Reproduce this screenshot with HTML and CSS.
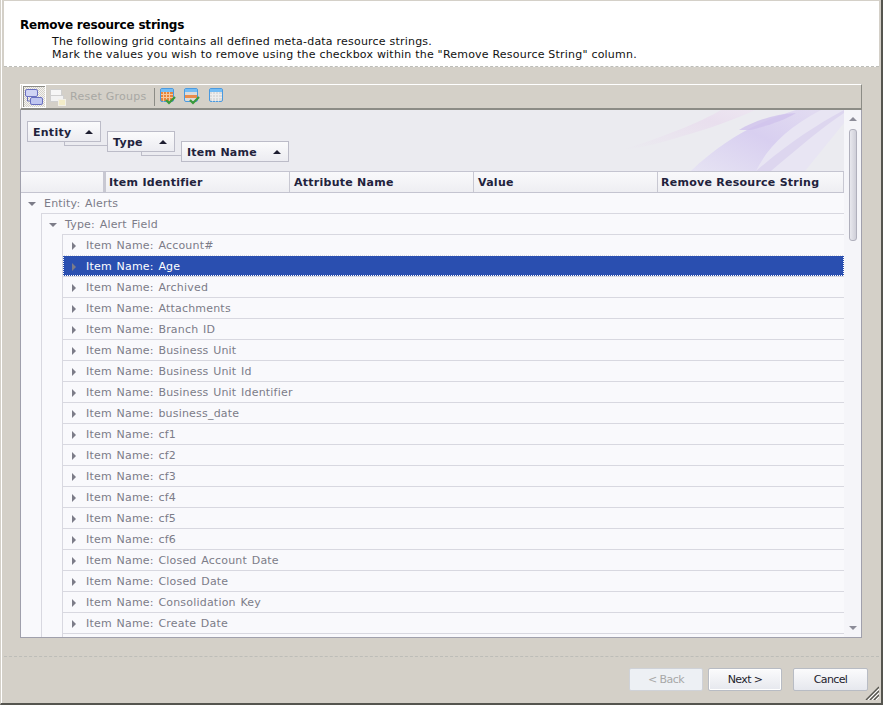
FILE: index.html
```html
<!DOCTYPE html>
<html lang="en">
<head>
<meta charset="utf-8">
<title>Remove resource strings</title>
<link rel="stylesheet" href="styles.css">
</head>
<body>
<div class="window">
  <header class="intro">
    <h1 class="intro-title">Remove resource strings</h1>
    <p class="intro-text">The following grid contains all defined meta-data resource strings.</p>
    <p class="intro-text">Mark the values you wish to remove using the checkbox within the "Remove Resource String" column.</p>
  </header>
  <main class="content">
    <section class="grid">
      <div class="toolbar">
        <button class="tool tool-active" type="button" aria-label="Group">
          <svg width="20" height="20" viewBox="0 0 20 20"><rect x="1.500" y="2.500" width="12" height="7" rx="1.500" fill="#d0d4f4" stroke="#6a70c0"/><rect x="6.500" y="10.500" width="12" height="7" rx="1.500" fill="#c0c6f0" stroke="#6a70c0"/><path d="M3.500 9.500v4.500h3" fill="none" stroke="#6a70c0"/></svg>
        </button>
        <button class="tool tool-disabled" type="button">
          <svg width="18" height="20" viewBox="0 0 18 20"><rect x="1.500" y="2.500" width="11" height="6" fill="#f6f6f6" stroke="#cfcfcf"/><rect x="1.500" y="8.500" width="13" height="6" fill="#f2f2f2" stroke="#cfcfcf"/><rect x="9.500" y="12.500" width="7" height="6" fill="#f3ecc8" stroke="#f2f0e6"/></svg>
          <span class="tool-label">Reset Groups</span>
        </button>
        <span class="tool-sep"></span>
        <button class="tool tool-icon" type="button" aria-label="Select all">
          <svg width="16" height="17" viewBox="0 0 16 17"><rect x="0.500" y="0.500" width="13" height="13" rx="1.500" fill="#e8843c" stroke="#4a9ae0"/><rect x="1" y="1" width="12" height="3" fill="#74bcf4"/><path d="M3.500 4v9.500M6.500 4v9.500M9.500 4v9.500M1 6.500h12M1 9.500h12" stroke="#f6c9a0"/><path d="M6 12l3 3 6-6" fill="none" stroke="#3a9a3a" stroke-width="2.200"/></svg>
        </button>
        <button class="tool tool-icon" type="button" aria-label="Select filtered">
          <svg width="16" height="17" viewBox="0 0 16 17"><rect x="0.500" y="0.500" width="13" height="13" rx="1.500" fill="#dcdcdc" stroke="#4a9ae0"/><rect x="1" y="1" width="12" height="3" fill="#74bcf4"/><rect x="1" y="7" width="12" height="3" fill="#ea8c4c"/><path d="M6 12l3 3 6-6" fill="none" stroke="#3a9a3a" stroke-width="2.200"/></svg>
        </button>
        <button class="tool tool-icon tool-last" type="button" aria-label="Clear selection">
          <svg width="15" height="17" viewBox="0 0 15 17"><rect x="0.500" y="0.500" width="13" height="13" rx="1.500" fill="#dcdcdc" stroke="#4a9ae0"/><rect x="1" y="1" width="12" height="3" fill="#74bcf4"/><path d="M3.500 4v9.500M6.500 4v9.500M9.500 4v9.500M1 6.500h12M1 9.500h12" stroke="#eeeeee"/></svg>
        </button>
      </div>
      <div class="grid-body">
        <div class="grid-main">
          <div class="group-area">
            <svg class="swoosh" width="823" height="61" viewBox="0 0 823 61" aria-hidden="true">
              <defs>
                <linearGradient id="sw" x1="0" y1="1" x2="1" y2="0"><stop offset="0" stop-color="#e6e3f3"/><stop offset="0.550" stop-color="#d8cff0"/><stop offset="1" stop-color="#e2dcf1"/></linearGradient>
                <linearGradient id="pk" x1="0" y1="1" x2="1" y2="0"><stop offset="0" stop-color="#ebebf0"/><stop offset="0.700" stop-color="#e9dfee"/><stop offset="1" stop-color="#ede6f1"/></linearGradient>
              </defs>
              <path d="M600 40C640 28 680 12 700 0H734C712 10 690 18 662 26C640 33 620 38 600 40Z" fill="url(#pk)"/>
              <path d="M670 61C700 33 730 14 775 0H823V13L784 61Z" fill="#e8e5f3"/>
              <path d="M670 61C700 33 730 14 775 0H800C765 18 745 40 735 61Z" fill="url(#sw)"/>
              <path d="M718 20C735 10 755 4 775 3C762 11 745 16 730 20Z" fill="#cfc2ec" opacity="0.800"/>
              <path d="M735 61C765 35 795 15 823 0V3C800 18 775 40 750 61Z" fill="#ddd6ef"/>
            </svg>
            <div class="group-chip chip-entity"><span>Entity</span><i class="sort-up"></i></div>
            <div class="group-chip chip-type"><span>Type</span><i class="sort-up"></i></div>
            <div class="group-chip chip-item"><span>Item Name</span><i class="sort-up"></i></div>
            <span class="link link-a"></span>
            <span class="link link-b"></span>
          </div>
          <div class="col-head">
            <div class="col col-spacer"></div>
            <div class="col col-a">Item Identifier</div>
            <div class="col col-b">Attribute Name</div>
            <div class="col col-b2">Value</div>
            <div class="col col-c">Remove Resource String</div>
          </div>
          <div class="tree">
            <div class="row level-0"><i class="arrow-down"></i>Entity: Alerts</div>
            <div class="indent">
              <div class="row level-1"><i class="arrow-down"></i>Type: Alert Field</div>
              <div class="indent">
                <div class="row item"><i class="arrow-right"></i>Item Name: Account#</div>
                <div class="row item selected"><i class="arrow-right"></i>Item Name: Age</div>
                <div class="row item"><i class="arrow-right"></i>Item Name: Archived</div>
                <div class="row item"><i class="arrow-right"></i>Item Name: Attachments</div>
                <div class="row item"><i class="arrow-right"></i>Item Name: Branch ID</div>
                <div class="row item"><i class="arrow-right"></i>Item Name: Business Unit</div>
                <div class="row item"><i class="arrow-right"></i>Item Name: Business Unit Id</div>
                <div class="row item"><i class="arrow-right"></i>Item Name: Business Unit Identifier</div>
                <div class="row item"><i class="arrow-right"></i>Item Name: business_date</div>
                <div class="row item"><i class="arrow-right"></i>Item Name: cf1</div>
                <div class="row item"><i class="arrow-right"></i>Item Name: cf2</div>
                <div class="row item"><i class="arrow-right"></i>Item Name: cf3</div>
                <div class="row item"><i class="arrow-right"></i>Item Name: cf4</div>
                <div class="row item"><i class="arrow-right"></i>Item Name: cf5</div>
                <div class="row item"><i class="arrow-right"></i>Item Name: cf6</div>
                <div class="row item"><i class="arrow-right"></i>Item Name: Closed Account Date</div>
                <div class="row item"><i class="arrow-right"></i>Item Name: Closed Date</div>
                <div class="row item"><i class="arrow-right"></i>Item Name: Consolidation Key</div>
                <div class="row item"><i class="arrow-right"></i>Item Name: Create Date</div>
                <div class="row item"></div>
              </div>
            </div>
          </div>
        </div>
        <div class="scrollbar">
          <i class="scroll-up"></i>
          <div class="scroll-thumb"></div>
          <i class="scroll-down"></i>
        </div>
      </div>
    </section>
  </main>
  <footer class="footer">
    <button class="btn btn-disabled" type="button" disabled>&lt; Back</button>
    <button class="btn btn-next" type="button">Next &gt;</button>
    <button class="btn btn-cancel" type="button">Cancel</button>
    <svg class="grip" width="14" height="14" viewBox="0 0 14 14" aria-hidden="true"><path d="M1 14L14 1M5 14L14 5M9 14L14 9" stroke="#55554f" stroke-width="1.400"/><path d="M3 14L14 3M7 14L14 7M11 14L14 11" stroke="#fff" stroke-width="1"/></svg>
  </footer>
</div>
</body>
</html>
```
FILE: styles.css
```css
* { box-sizing: border-box; }
html, body { margin: 0; padding: 0; }
body { width: 883px; height: 705px; overflow: hidden; font-family: "DejaVu Sans", sans-serif; font-size: 11px; letter-spacing: 0.26px; }
.window { width: 883px; height: 705px; background: #d4d0c8; padding: 0 0 0 3px; border-left: 1px solid #d4d0c8; box-shadow: inset 1px 0 0 #fff; border-bottom: 2px solid #55554f; border-right: 2px solid #55554f; display: flex; flex-direction: column; position: relative; }
.intro { margin: 1px 2px 0 0; height: 66px; background: #fff; padding: 17px 16px 0 16px; border-bottom: 1px dashed #bdbdb8; }
.intro-title { margin: 0 0 3px; font-size: 12px; line-height: 14px; font-weight: bold; color: #000; letter-spacing: -0.2px; }
.intro-text { margin: 0 0 0 32px; font-size: 11px; line-height: 13px; color: #111; letter-spacing: 0.21px; }
.content { height: 589px; flex: none; padding: 17px 0 0 16px; }
.grid { width: 842px; height: 554px; display: flex; flex-direction: column; }
.toolbar { height: 26px; flex: none; display: flex; align-items: center; background: #d4d0c8; border-top: 1px solid #fff; border-left: 1px solid #fff; border-right: 1px solid #8c8c86; border-bottom: 2px solid #8c8c86; padding-left: 1px; }
.tool { border: 0; background: none; padding: 0; display: flex; align-items: center; font: inherit; letter-spacing: inherit; height: 23px; }
.tool-active { width: 24px; justify-content: center; border: 1px solid #fff; background: repeating-conic-gradient(#d4d0c8 0 25%, #f4f4f2 0 50%) 0 0 / 2px 2px; box-shadow: inset 1px 1px 0 #8c8c86; margin-right: 3px; }
.tool-label { color: #a8a8a4; margin-left: 3px; }
.tool-sep { width: 1px; height: 18px; background: #8c8c86; margin: 0 5px 0 7px; }
.tool-icon { width: 16px; margin-right: 8px; }
.tool-last { margin-left: 1px; }
.grid-body { flex: 1; min-height: 0; display: flex; border-left: 1px solid #a0a0ac; border-bottom: 1px solid #a0a0ac; border-right: 1px solid #a0a0ac; }
.grid-main { width: 823px; display: flex; flex-direction: column; min-height: 0; overflow: hidden; background: #f9f9fc; }
.group-area { height: 61px; flex: none; background: #ebebf0; position: relative; overflow: hidden; }
.swoosh { position: absolute; left: 0; top: 0; }
.group-chip { position: absolute; height: 21px; background: linear-gradient(#fbfbfc, #ececf1); border: 1px solid #bcbcc8; display: flex; align-items: center; justify-content: space-between; padding: 1px 7px 0 5px; font-weight: bold; color: #22223c; z-index: 1; }
.chip-entity { left: 6px; top: 11px; width: 74px; }
.chip-type { left: 86px; top: 21px; width: 68px; }
.chip-item { left: 160px; top: 31px; width: 108px; }
.sort-up { width: 0; height: 0; border-left: 4px solid transparent; border-right: 4px solid transparent; border-bottom: 4px solid #1e1e30; }
.link { position: absolute; border-left: 1px solid #bcbcc8; border-bottom: 1px solid #bcbcc8; height: 4px; }
.link-a { left: 43px; top: 32px; width: 43px; }
.link-b { left: 120px; top: 42px; width: 40px; }
.col-head { height: 22px; flex: none; display: flex; border-top: 1px solid #c4c4d0; border-bottom: 1px solid #c4c4d0; background: linear-gradient(#f9f9fb, #eeeef2); font-weight: bold; color: #22223c; line-height: 22px; }
.col { border-right: 1px solid #c8c8d2; padding-left: 4px; white-space: nowrap; overflow: hidden; }
.col-spacer { width: 85px; border-right: 3px solid #c8c8d2; }
.col-a { width: 184px; padding-left: 3px; }
.col-b { width: 184px; }
.col-b2 { width: 184px; }
.col-c { width: 186px; padding-left: 3px; }
.tree { flex: 1; min-height: 0; overflow: hidden; color: #7c7c88; margin-top: -1px; letter-spacing: 0.2px; word-spacing: 1px; }
.indent { margin-left: 20px; border-left: 1px solid #d8d8e0; }
.row { height: 21px; white-space: nowrap; display: flex; align-items: center; padding-top: 1px; }
.level-0 { padding-left: 7px; padding-top: 2px; }
.level-1 { padding-left: 7px; border-top: 1px solid #d8d8e0; }
.item { border-top: 1px solid #d8d8e0; padding-left: 9px; }
.selected { background: #2a4fb0; color: #fff; outline: 1px dotted #fff; outline-offset: -1px; }
.arrow-down { width: 0; height: 0; border-left: 4px solid transparent; border-right: 4px solid transparent; border-top: 4px solid #7c7c88; margin-right: 8px; }
.arrow-right { width: 0; height: 0; border-top: 4px solid transparent; border-bottom: 4px solid transparent; border-left: 4px solid #7c7c88; margin-right: 10px; }
.scrollbar { width: 17px; background: #f5f5f9; display: flex; flex-direction: column; align-items: center; }
.scroll-up { margin-top: 7px; width: 0; height: 0; border-left: 4px solid transparent; border-right: 4px solid transparent; border-bottom: 4px solid #8c8c98; }
.scroll-thumb { margin-top: 8px; width: 8px; height: 112px; border: 1px solid #b0b0bc; border-radius: 3px; background: linear-gradient(90deg, #e8e8ee, #cfcfd8); }
.scroll-down { margin-top: auto; margin-bottom: 7px; width: 0; height: 0; border-left: 4px solid transparent; border-right: 4px solid transparent; border-top: 4px solid #8c8c98; }
.footer { flex: 1; margin: 0 2px 0 0; border-top: 1px dashed #bdbdb8; display: flex; align-items: flex-start; padding: 11px 0 0 625px; position: relative; }
.btn { height: 23px; width: 74px; border: 1px solid #b8bcc4; border-radius: 2px; background: linear-gradient(#fbfbfc, #e6e8ee); font-family: "DejaVu Sans", sans-serif; font-size: 11px; letter-spacing: -0.6px; color: #22222c; padding: 0; }
.btn-disabled { background: #edf0f4; color: #a8a8a8; border-color: #cfd2d8; }
.btn-next { margin-left: 5px; box-shadow: inset 0 0 0 1px #fff; }
.btn-cancel { margin-left: 11px; width: 75px; }
.grip { position: absolute; right: 0; bottom: 3px; }
```
